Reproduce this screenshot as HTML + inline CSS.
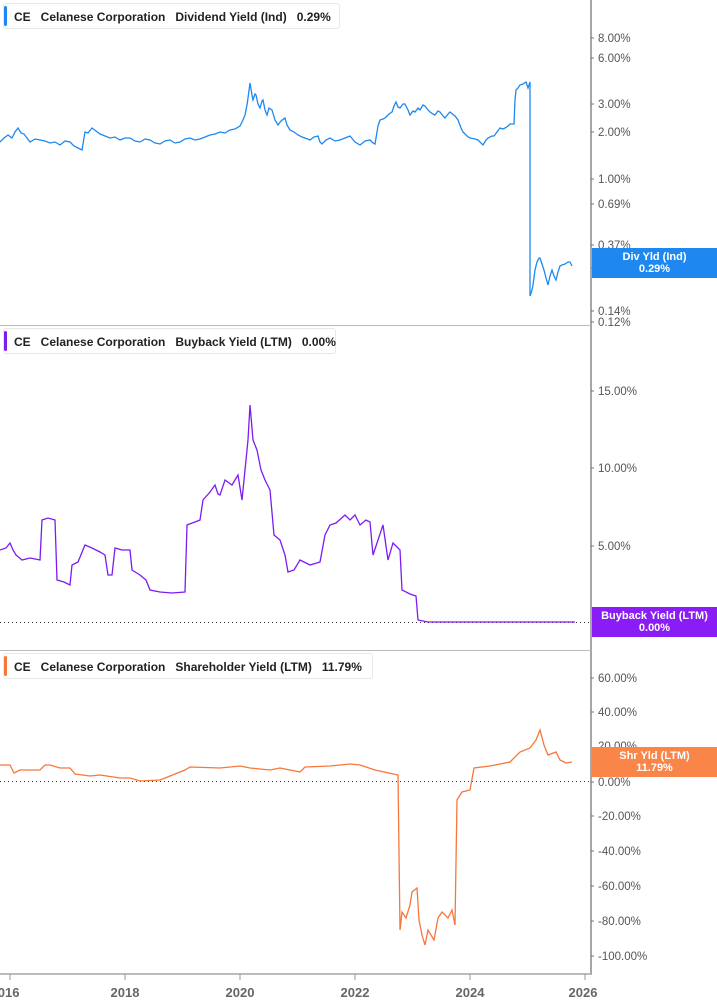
<!DOCTYPE html>
<html><head><meta charset="utf-8"><style>
body{margin:0;width:717px;height:1005px;background:#fff;overflow:hidden;font-family:"Liberation Sans",Arial,sans-serif;position:relative}
.leg{position:absolute;left:3px;height:26px;border:1px solid #e8e8e8;border-radius:3px;background:#fff;font-size:12px;font-weight:bold;color:#222;line-height:26px;padding-left:10px;white-space:nowrap;box-sizing:border-box}
.leg b{position:absolute;left:0;top:2px;bottom:2px;width:3px;border-radius:2px}
.leg span{margin-right:10px;display:inline-block}
</style></head><body>
<svg width="717" height="1005" style="position:absolute;left:0;top:0" font-family="Liberation Sans,Arial,sans-serif" font-size="11.5" fill="#555">
<line x1="591" y1="0" x2="591" y2="975" stroke="#888" stroke-width="1.5"/>
<line x1="0" y1="325.5" x2="591" y2="325.5" stroke="#bbb"/>
<line x1="0" y1="650.5" x2="591" y2="650.5" stroke="#bbb"/>
<line x1="0" y1="974" x2="591" y2="974" stroke="#bbb" stroke-width="2"/>
<g stroke="#999"><line x1="10" y1="974" x2="10" y2="980"/><line x1="125" y1="974" x2="125" y2="980"/><line x1="240" y1="974" x2="240" y2="980"/><line x1="355" y1="974" x2="355" y2="980"/><line x1="470" y1="974" x2="470" y2="980"/><line x1="585" y1="974" x2="585" y2="980"/></g>
<g stroke="#777"><line x1="591" y1="38" x2="594" y2="38"/><line x1="591" y1="58" x2="594" y2="58"/><line x1="591" y1="104" x2="594" y2="104"/><line x1="591" y1="132" x2="594" y2="132"/><line x1="591" y1="179" x2="594" y2="179"/><line x1="591" y1="204" x2="594" y2="204"/><line x1="591" y1="245" x2="594" y2="245"/><line x1="591" y1="268" x2="594" y2="268"/><line x1="591" y1="311" x2="594" y2="311"/><line x1="591" y1="322" x2="594" y2="322"/><line x1="591" y1="391" x2="594" y2="391"/><line x1="591" y1="468" x2="594" y2="468"/><line x1="591" y1="546" x2="594" y2="546"/><line x1="591" y1="678" x2="594" y2="678"/><line x1="591" y1="712" x2="594" y2="712"/><line x1="591" y1="782" x2="594" y2="782"/><line x1="591" y1="816" x2="594" y2="816"/><line x1="591" y1="851" x2="594" y2="851"/><line x1="591" y1="886" x2="594" y2="886"/><line x1="591" y1="921" x2="594" y2="921"/><line x1="591" y1="956" x2="594" y2="956"/></g>
<g font-weight="bold" font-size="13" fill="#666" text-anchor="middle"><text x="5" y="997">2016</text><text x="125" y="997">2018</text><text x="240" y="997">2020</text><text x="355" y="997">2022</text><text x="470" y="997">2024</text><text x="583" y="997">2026</text></g>
<g>
<text x="598" y="42">8.00%</text><text x="598" y="62">6.00%</text><text x="598" y="108">3.00%</text><text x="598" y="136">2.00%</text><text x="598" y="183">1.00%</text><text x="598" y="208">0.69%</text><text x="598" y="249">0.37%</text><text x="598" y="272">0.26%</text><text x="598" y="315">0.14%</text><text x="598" y="326">0.12%</text>
<text x="598" y="395">15.00%</text><text x="598" y="472">10.00%</text><text x="598" y="550">5.00%</text><text x="598" y="626">0.00%</text>
<text x="598" y="682">60.00%</text><text x="598" y="716">40.00%</text><text x="598" y="750">20.00%</text><text x="598" y="786">0.00%</text><text x="598" y="820">-20.00%</text><text x="598" y="855">-40.00%</text><text x="598" y="890">-60.00%</text><text x="598" y="925">-80.00%</text><text x="598" y="960">-100.00%</text>
</g>
<line x1="0" y1="622.5" x2="591" y2="622.5" stroke="#333" stroke-dasharray="1,3"/>
<line x1="0" y1="781.5" x2="591" y2="781.5" stroke="#333" stroke-dasharray="1,3"/>
<polyline fill="none" stroke="#1e88f0" stroke-width="1.3" points="0,142 4,138 8,135 12,138 15,132 18,128 21,133 24,134 27,138 30,142 35,139 40,140 45,141 50,143 55,142 60,145 65,141 70,142 74,146 78,148 82,150 85,132 88,133 92,128 96,131 100,134 105,136 110,138 115,137 120,140 125,138 130,138 135,141 140,142 145,139 150,140 155,143 160,144 165,141 170,140 175,143 180,142 185,139 190,138 195,140 200,139 205,137 210,135 215,134 220,132 225,133 230,130 235,129 240,126 243,120 245,115 247,105 248,98 250,83 252,95 253,100 255,94 256,95 258,104 260,108 262,101 263,100 265,110 267,115 269,108 272,110 275,120 278,125 281,121 285,118 287,125 290,130 294,132 298,135 302,137 305,138 310,140 314,137 318,136 320,142 322,144 326,140 330,138 335,141 340,140 345,138 350,136 355,142 360,145 365,141 370,140 373,143 375,144 378,126 380,120 383,119 385,118 389,114 392,112 394,106 396,102 398,107 400,108 403,104 405,104 408,110 410,115 413,111 415,112 418,108 420,110 423,105 425,106 428,110 430,112 433,114 435,115 438,111 440,112 443,116 445,118 448,114 450,112 455,116 458,120 461,128 463,132 467,136 470,138 475,139 478,140 481,143 483,145 486,140 488,138 492,136 494,136 497,132 500,128 503,129 505,128 508,126 510,124 514,124 515,100 516,90 518,88 520,85 523,84 526,82 528,88 530,82 530,296 532,290 533,285 535,270 537,262 539,258 540,258 542,264 544,270 546,278 548,285 550,276 552,270 554,276 556,280 558,272 560,266 562,265 565,264 568,262 570,262 572,266"/>
<polyline fill="none" stroke="#7b1cf0" stroke-width="1.3" points="0,550 6,548 10,543 13,550 16,555 22,560 30,558 40,560 42,520 48,518 55,520 57,580 64,582 70,585 72,565 78,562 85,545 92,548 100,552 105,555 108,575 112,575 115,548 122,550 130,550 132,570 140,575 146,580 150,590 160,592 172,593 185,592 187,525 195,522 200,520 203,500 210,492 215,485 218,494 220,495 225,480 232,485 238,475 242,500 245,470 248,440 250,405 253,440 257,450 261,470 265,480 270,490 274,535 280,540 285,555 288,572 294,570 300,560 310,565 320,562 325,535 330,525 336,523 345,515 350,520 355,515 360,525 366,520 370,522 373,555 378,540 383,525 388,560 393,543 400,550 402,590 410,594 416,596 418,620 428,622 575,622"/>
<polyline fill="none" stroke="#f7773a" stroke-width="1.3" points="0,765 10,765 14,773 20,770 40,770 45,765 50,765 60,768 70,768 75,774 90,776 100,775 120,778 130,778 140,781 160,780 170,776 185,770 190,767 220,768 240,766 250,768 270,770 280,768 300,772 305,767 330,766 350,764 360,765 375,770 398,775 400,930 402,912 406,918 410,905 412,892 417,888 419,920 422,935 425,945 428,930 434,940 438,918 442,912 448,918 452,910 455,925 457,800 462,792 470,790 474,768 490,766 510,762 520,752 530,748 536,740 540,730 544,745 548,755 556,752 560,760 566,763 572,762"/>
</svg>
<div class="leg" style="top:3px;width:337px"><b style="background:#1e88f0"></b><span>CE</span><span>Celanese Corporation</span><span>Dividend Yield (Ind)</span><span>0.29%</span></div>
<div class="leg" style="top:328px;width:333px"><b style="background:#7b1cf0"></b><span>CE</span><span>Celanese Corporation</span><span>Buyback Yield (LTM)</span><span>0.00%</span></div>
<div class="leg" style="top:653px;width:370px"><b style="background:#f7773a"></b><span>CE</span><span>Celanese Corporation</span><span>Shareholder Yield (LTM)</span><span>11.79%</span></div>
<div style="position:absolute;left:592px;width:125px;top:248px;background:#1e88f0;color:#fff;font-size:11px;font-weight:bold;text-align:center;line-height:12px;padding:3px 0">Div Yld (Ind)<br>0.29%</div>
<div style="position:absolute;left:592px;width:125px;top:607px;background:#8a1cf5;color:#fff;font-size:11px;font-weight:bold;text-align:center;line-height:12px;padding:3px 0">Buyback Yield (LTM)<br>0.00%</div>
<div style="position:absolute;left:592px;width:125px;top:747px;background:#f98548;color:#fff;font-size:11px;font-weight:bold;text-align:center;line-height:12px;padding:3px 0">Shr Yld (LTM)<br>11.79%</div>
</body></html>
